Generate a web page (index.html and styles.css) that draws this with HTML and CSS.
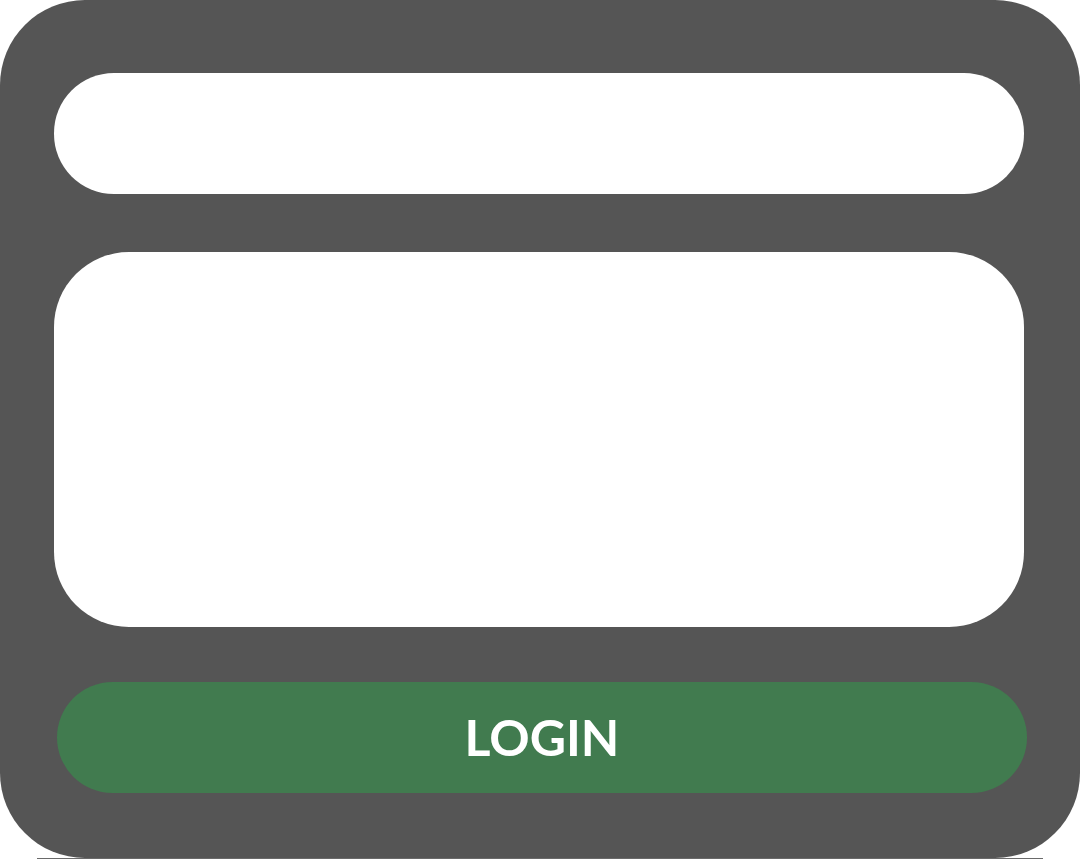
FILE: index.html
```html
<!DOCTYPE html>
<html>
<head>
<meta charset="utf-8">
<link rel="stylesheet" href="styles.css">
</head>
<body>
<div class="frame">
  <div class="field"></div>
  <div class="panel"></div>
  <button class="login">LOGIN</button>
</div>
<div class="rule"></div>
</body>
</html>
```
FILE: styles.css
```css
html, body {
  margin: 0;
  padding: 0;
  background: #ffffff;
}
.frame {
  box-sizing: border-box;
  width: 1080px;
  height: 858px;
  background: #555555;
  border-radius: 85px;
  padding: 73px 56px 0 54px;
  display: flex;
  flex-direction: column;
}
.field {
  height: 121px;
  background: #ffffff;
  border-radius: 60px;
}
.panel {
  margin-top: 58px;
  height: 375px;
  background: #ffffff;
  border-radius: 75px;
}
.login {
  margin: 55px -3px 0 3px;
  height: 111px;
  border: none;
  border-radius: 56px;
  background: #417b4f;
  color: #ffffff;
  font-family: Lato, "Liberation Sans", sans-serif;
  font-weight: 700;
  font-size: 50px;
  letter-spacing: 0;
  padding: 0;
  line-height: 111px;
}
.rule {
  margin: 0 37px;
  height: 1px;
  background: #6a6a6a;
}
```
